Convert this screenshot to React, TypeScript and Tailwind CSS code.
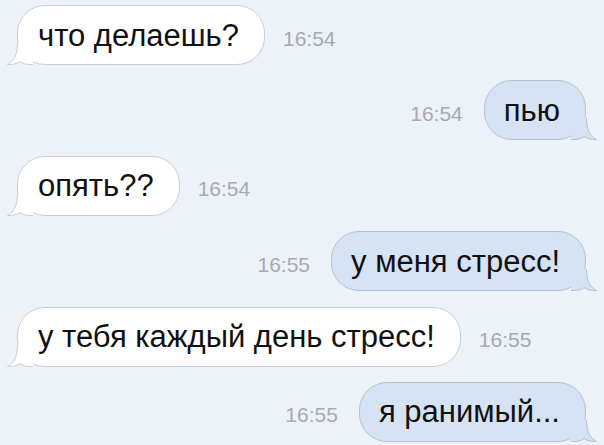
const messages = [
  { text: 'что делаешь?', time: '16:54', out: false },
  { text: 'пью', time: '16:54', out: true },
  { text: 'опять??', time: '16:54', out: false },
  { text: 'у меня стресс!', time: '16:55', out: true },
  { text: 'у тебя каждый день стресс!', time: '16:55', out: false },
  { text: 'я ранимый...', time: '16:55', out: true },
];

function Tail({ out }: { out: boolean }) {
  const fill = out ? '#d6e3f5' : '#ffffff';
  const stroke = out ? '#b4c1d3' : '#c9ced6';
  return (
    <svg
      width="30"
      height="30"
      viewBox="0 0 30 30"
      className={
        out
          ? 'pointer-events-none absolute -right-[12px] -bottom-px -scale-x-100'
          : 'pointer-events-none absolute -left-[11px] -bottom-px'
      }
    >
      <rect x="0" y="14" width="26" height="16" fill="#edf1f8" />
      <path
        d="M10.5,8 C10.5,20 7,26 0.5,29.5 C6,29.8 10,28.5 13,26.5 C15.5,28.5 18,29.5 24,29.5 L26,29.5 L26,8 Z"
        fill={fill}
      />
      <path
        d="M10.5,8 C10.5,20 7,26 0.5,29.5 C6,29.8 10,28.5 13,26.5 C15.5,28.5 18,29.5 24,29.5 L26,29.5"
        fill="none"
        stroke={stroke}
        strokeWidth="1"
      />
    </svg>
  );
}

function Bubble({ text, out }: { text: string; out: boolean }) {
  return (
    <div
      className={
        out
          ? 'relative flex h-[60px] items-center rounded-[28px] border border-[#b4c1d3] bg-[#d6e3f5] pl-[19px] pr-[25px]'
          : 'relative flex h-[60px] items-center rounded-[28px] border border-[#c9ced6] bg-white pl-[20px] pr-[25px]'
      }
    >
      <Tail out={out} />
      <span className="relative whitespace-nowrap text-[31px] leading-none text-[#111]">{text}</span>
    </div>
  );
}

function Time({ value }: { value: string }) {
  return <span className="mt-[6px] text-[21px] leading-none text-[#a6aab2]">{value}</span>;
}

export default function App() {
  return (
    <div
      className="flex h-[445px] w-[604px] flex-col gap-[15.4px] overflow-hidden bg-[#edf1f8] pt-[5px]"
      style={{ fontFamily: '"Liberation Sans", Arial, sans-serif' }}
    >
      {messages.map((m, i) =>
        m.out ? (
          <div key={i} className="flex items-center justify-end gap-[21px] pr-[18px]">
            <Time value={m.time} />
            <Bubble text={m.text} out />
          </div>
        ) : (
          <div key={i} className="flex items-center gap-[18px] pl-[17px]">
            <Bubble text={m.text} out={false} />
            <Time value={m.time} />
          </div>
        ),
      )}
    </div>
  );
}
